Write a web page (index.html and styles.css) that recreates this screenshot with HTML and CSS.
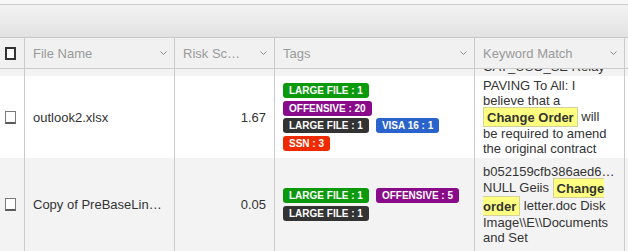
FILE: index.html
```html
<!DOCTYPE html>
<html>
<head>
    <link rel="stylesheet" href="styles.css">
</head>
<body>
    <div class="top"></div>
    <div class="toolbar"></div>

    <div class="row head">
        <div class="cell check"><span class="box boxHead"></span></div>
        <div class="cell hcell"><span class="label">File Name</span><svg class="chev" width="7" height="4" viewBox="0 0 7 4"><polyline points="0.5,0.5 3.5,3.5 6.5,0.5" /></svg></div>
        <div class="cell hcell"><span class="label">Risk Score</span><svg class="chev" width="7" height="4" viewBox="0 0 7 4"><polyline points="0.5,0.5 3.5,3.5 6.5,0.5" /></svg></div>
        <div class="cell hcell"><span class="label">Tags</span><svg class="chev" width="7" height="4" viewBox="0 0 7 4"><polyline points="0.5,0.5 3.5,3.5 6.5,0.5" /></svg></div>
        <div class="cell hcell"><span class="label">Keyword Match</span><svg class="chev" width="7" height="4" viewBox="0 0 7 4"><polyline points="0.5,0.5 3.5,3.5 6.5,0.5" /></svg></div>
        <div class="cell last"></div>
    </div>

    <div class="row stub">
        <div class="cell"></div>
        <div class="cell"></div>
        <div class="cell"></div>
        <div class="cell"></div>
        <div class="cell kw"><div>CAT_USO_SE Relay</div></div>
        <div class="cell last"></div>
    </div>

    <div class="row odd">
        <div class="cell check"><span class="box"></span></div>
        <div class="cell name"><span class="label">outlook2.xlsx</span></div>
        <div class="cell score">1.67</div>
        <div class="cell">
            <div class="tags">
                <span class="tag green">LARGE FILE : 1</span>
                <span class="tag purple">OFFENSIVE : 20</span>
                <span class="tag dark">LARGE FILE : 1</span>
                <span class="tag blue">VISA 16 : 1</span>
                <span class="tag red">SSN : 3</span>
            </div>
        </div>
        <div class="cell kw"><div>PAVING To All: I believe that a <span class="hit">Change Order</span> will be required to amend the original contract</div></div>
        <div class="cell last"></div>
    </div>

    <div class="row even">
        <div class="cell check"><span class="box"></span></div>
        <div class="cell name"><span class="label">Copy of PreBaseLine Survey.docx</span></div>
        <div class="cell score">0.05</div>
        <div class="cell">
            <div class="tags">
                <span class="tag green">LARGE FILE : 1</span>
                <span class="tag purple">OFFENSIVE : 5</span>
                <span class="tag dark">LARGE FILE : 1</span>
            </div>
        </div>
        <div class="cell kw"><div>b052159cfb386aed6&hellip; NULL Geiis <span class="hit">Change order</span> letter.doc Disk Image\\E\\Documents and Set</div></div>
        <div class="cell last"></div>
    </div>
</body>
</html>
```

FILE: styles.css
```css
*
{
    box-sizing: border-box;
}
body
{
    margin: 0;
    width: 628px;
    height: 251px;
    overflow: hidden;
    background-color: #fff;
    color: #333;
    font-family: "Liberation Sans", Arial, sans-serif;
    font-size: 13px;
}
.top
{
    height: 5px;
    background-color: #f7f7f7;
    border-bottom: 1px solid #cdcdcd;
}
.toolbar
{
    height: 33px;
    background: linear-gradient(#f3f3f3, #e2e2e2);
    border-bottom: 1px solid #c9c9c9;
}
.row
{
    display: grid;
    grid-template-columns: 25px 150px 100px 200px 150px 1fr;
}
.cell
{
    display: flex;
    align-items: center;
    min-width: 0;
    padding: 0 8px;
    border-right: 1px solid #cbcbcb;
}
.last
{
    border-right: 0;
}
.check
{
    padding-left: 5px;
}
.box
{
    width: 13px;
    height: 13px;
    background-color: #fff;
    border: 1px solid #7a7a7a;
    border-bottom: 2px solid #5a5a5a;
}
.boxHead
{
    border: 2px solid #333;
}

/* header */
.head
{
    height: 31px;
    background-color: #f0f1f0;
    border-bottom: 1px solid #cbcbcb;
    color: #9a9a9a;
}
.hcell
{
    padding-right: 7px;
}
.label
{
    flex: 1;
    min-width: 0;
    overflow: hidden;
    white-space: nowrap;
    text-overflow: ellipsis;
}
.chev
{
    flex: none;
    margin-left: 17px;
    fill: none;
    stroke: #8a8a8a;
    stroke-width: 1;
}

/* body rows */
.stub
{
    height: 7px;
    grid-template-rows: 7px;
    overflow: hidden;
    background-color: #f3f3f3;
}
.stub .cell
{
    overflow: hidden;
    align-items: flex-end;
    padding-bottom: 2px;
}
.stub .kw div
{
    white-space: nowrap;
}
.odd
{
    height: 82px;
}
.even
{
    height: 93px;
    background-color: #f3f3f3;
}
.score
{
    justify-content: flex-end;
}
.kw
{
    line-height: 15px;
    padding-right: 13px;
}
.hit
{
    font-weight: bold;
    line-height: 18px;
    padding: 1.5px 3px;
    background-color: #ffff80;
    border: 1px solid #d2d29a;
}

/* tags */
.tags
{
    display: flex;
    flex-wrap: wrap;
    gap: 2.5px 7px;
    max-width: 180px;
}
.tag
{
    height: 15px;
    line-height: 15px;
    padding: 0 6px;
    border-radius: 3px;
    color: #fff;
    font-size: 10px;
    font-weight: bold;
    white-space: nowrap;
}
.green
{
    background-color: #0b9a0b;
}
.purple
{
    background-color: #8a0b8a;
}
.dark
{
    background-color: #333;
}
.blue
{
    background-color: #2a63cc;
}
.red
{
    background-color: #ef2a00;
}
```
